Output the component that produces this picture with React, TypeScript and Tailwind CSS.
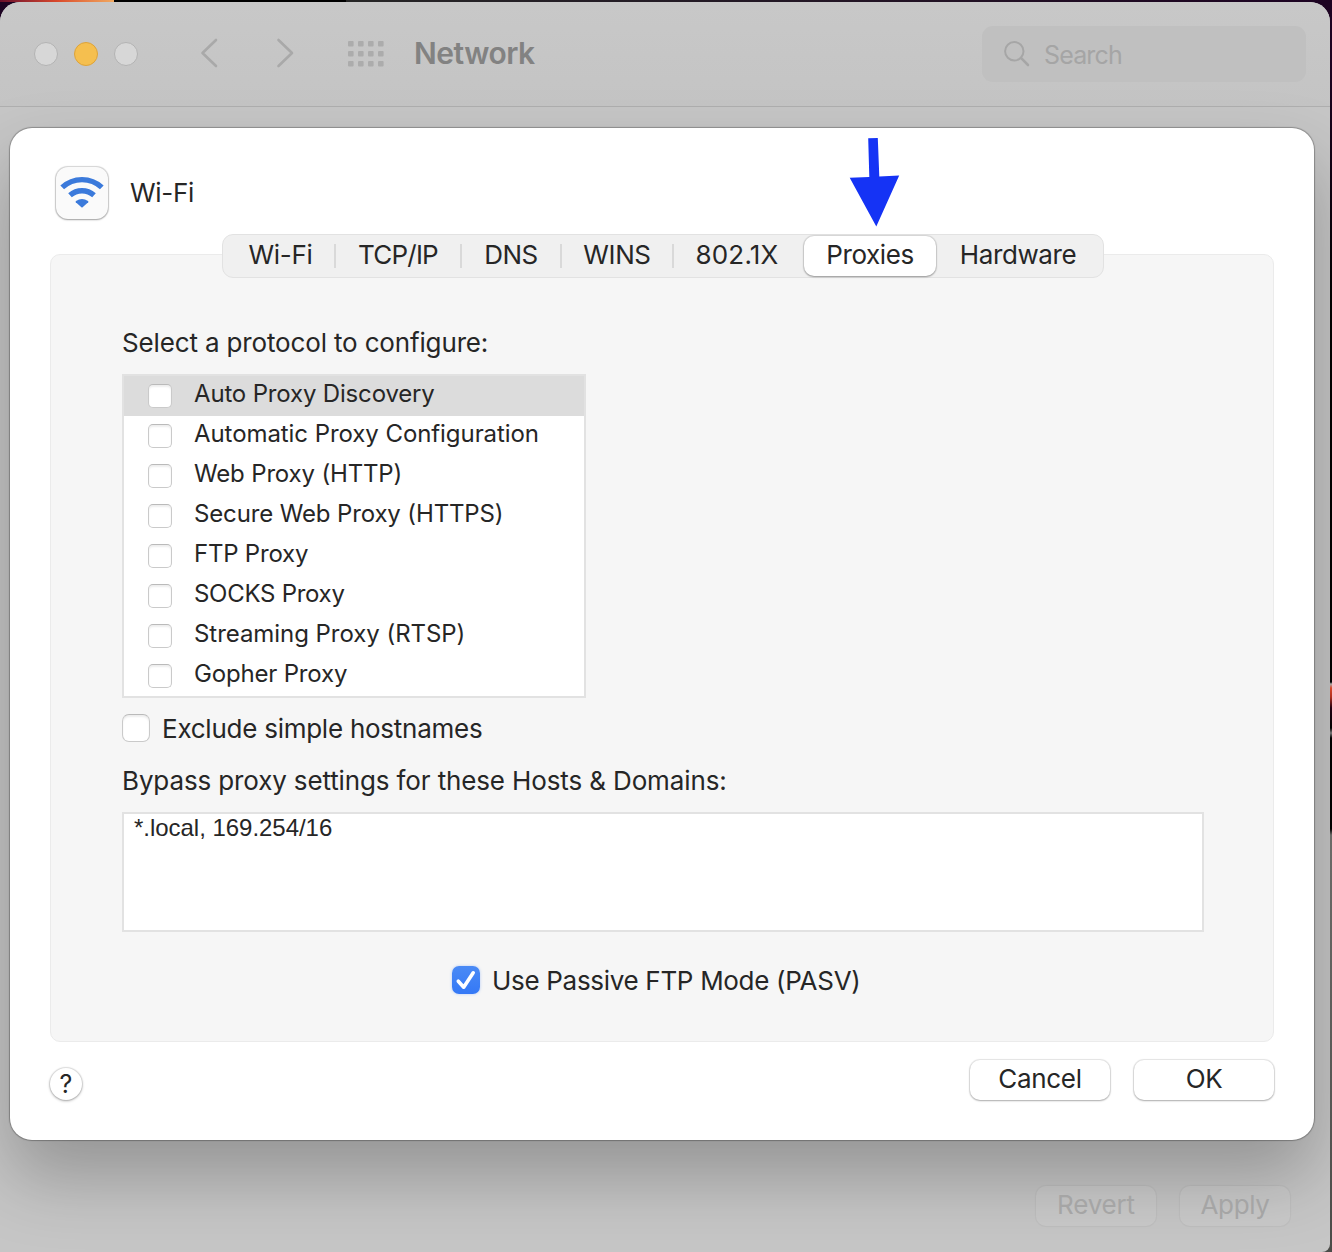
import { useState } from "react";
import clsx from "clsx";

const tabs = [
	{ name: "Wi-Fi", width: "w-[111px]", tracking: "tracking-[-0.3px] pl-1", divider: false },
	{ name: "TCP/IP", width: "w-[126px]", tracking: "tracking-[-0.8px]", divider: true },
	{ name: "DNS", width: "w-[100px]", tracking: "tracking-[-0.5px]", divider: true },
	{ name: "WINS", width: "w-[112px]", tracking: "tracking-[-0.4px]", divider: true },
	{ name: "802.1X", width: "w-[132px]", tracking: "tracking-[0.2px] pr-1", divider: true },
	{ name: "Proxies", width: "w-[132px]", tracking: "tracking-[-0.4px]", divider: false },
	{ name: "Hardware", width: "w-[164px]", tracking: "tracking-[-0.4px]", divider: false },
];

const protocols = [
	{ name: "Auto Proxy Discovery", tracking: "tracking-[-0.17px]" },
	{ name: "Automatic Proxy Configuration", tracking: "tracking-[-0.07px]" },
	{ name: "Web Proxy (HTTP)", tracking: "tracking-[-0.16px]" },
	{ name: "Secure Web Proxy (HTTPS)", tracking: "tracking-[-0.14px]" },
	{ name: "FTP Proxy", tracking: "tracking-[-0.22px]" },
	{ name: "SOCKS Proxy", tracking: "tracking-[-0.28px]" },
	{ name: "Streaming Proxy (RTSP)", tracking: "tracking-[-0.05px]" },
	{ name: "Gopher Proxy", tracking: "tracking-[-0.18px]" },
];

function TitleBar() {
	return (
		<header className="flex h-[105px] shrink-0 items-start border-b border-[#afafaf] bg-linear-to-b from-[#c8c8c8] to-[#c4c4c4] pl-[34px] pr-6">
			<div className="mt-10 flex gap-4">
				<span className="size-6 rounded-full border border-[#b3b3b3] bg-[#d7d7d7]" />
				<span className="size-6 rounded-full border border-[#dda33a] bg-[#f5bf4f]" />
				<span className="size-6 rounded-full border border-[#b3b3b3] bg-[#d7d7d7]" />
			</div>
			<svg
				className="ml-[62px] mt-[34px]"
				width="96"
				height="34"
				fill="none"
				stroke="#a9a9a9"
				strokeWidth="2.6"
				strokeLinecap="round"
				strokeLinejoin="round"
			>
				<path d="M16 4 L2.5 17 L16 30" />
				<path d="M78.5 4 L92 17 L78.5 30" />
			</svg>
			<svg className="ml-[52px] mt-[39px]" width="36" height="26" fill="#acacac">
				{[0, 10, 20].map((y) =>
					[0, 10, 20, 30].map((x) => (
						<rect key={`${x}-${y}`} x={x} y={y} width="5.6" height="5.6" rx="1" />
					))
				)}
			</svg>
			<h1 className="ml-[30px] mt-8 text-[30px] font-semibold leading-[38px] tracking-[-0.5px] text-[#828282]">
				Network
			</h1>
			<div className="ml-auto mt-6 flex h-14 w-[324px] items-center rounded-[11px] bg-[#c0c0c0] pl-[22px]">
				<svg
					width="26"
					height="26"
					fill="none"
					stroke="#a6a6a6"
					strokeWidth="2"
					strokeLinecap="round"
				>
					<circle cx="10.3" cy="10.3" r="9.2" />
					<path d="M17.2 17.2 L24 24" strokeWidth="2.6" />
				</svg>
				<span className="ml-[14px] mt-px text-[25px] leading-8 tracking-[-0.85px] text-[#a5a5a5]">
					Search
				</span>
			</div>
		</header>
	);
}

function WifiIcon() {
	return (
		<div className="flex size-[52px] items-center justify-center rounded-[12px] bg-[#fafafa] pb-0.5 shadow-[0_0_1px_0.5px_rgba(0,0,0,0.16),0_1px_2px_rgba(0,0,0,0.25)]">
			<svg width="44" height="34" viewBox="0 0 44 34" fill="none" stroke="#3b7adb">
				<path d="M2.2 12.4 A29 29 0 0 1 41.8 12.4" strokeWidth="5.4" />
				<path d="M10 20.3 A18 18 0 0 1 34 20.3" strokeWidth="5.4" />
				<path
					d="M15.8 27.2 Q15.4 26.6 16 26.1 Q22 21.7 28 26.1 Q28.6 26.6 28.2 27.2 L22.6 32.3 Q22 32.8 21.4 32.3 Z"
					fill="#3b7adb"
					stroke="none"
				/>
			</svg>
		</div>
	);
}

function Checkbox({
	checked = false,
	small = false,
	onClick,
}: {
	checked?: boolean;
	small?: boolean;
	onClick?: () => void;
}) {
	return (
		<button
			role="checkbox"
			aria-checked={checked}
			onClick={onClick}
			className={clsx(
				"flex shrink-0 items-center justify-center",
				small ? "size-6 rounded-[5px]" : "size-7 rounded-[7px]",
				checked
					? "bg-linear-to-b from-[#4a8af5] to-[#3478f6] shadow-[0_0_3px_rgba(52,120,246,0.35)]"
					: "border border-[#cacaca] border-t-[#bababa] bg-white shadow-[inset_0_2px_2px_rgba(0,0,0,0.07)]"
			)}
		>
			{checked && (
				<svg
					width="28"
					height="28"
					fill="none"
					stroke="#fff"
					strokeWidth="3.6"
					strokeLinecap="round"
					strokeLinejoin="round"
				>
					<path d="M6.3 15.2 L11.7 21.2 L21.2 6.8" />
				</svg>
			)}
		</button>
	);
}

function TabBar({
	active,
	setActive,
}: {
	active: string;
	setActive: (name: string) => void;
}) {
	return (
		<nav className="relative z-10 -mb-6 ml-[172px] flex h-11 w-[882px] items-center rounded-[11px] border border-[#e2e2e2] bg-[#f0f0f0]">
			{tabs.map((tab) => (
				<button
					key={tab.name}
					onClick={() => setActive(tab.name)}
					className={clsx(
						"flex shrink-0 items-center justify-center pb-[3px] text-[26px]",
						tab.width,
						tab.tracking,
						tab.divider && "h-6 border-l-2 border-[#d9d9d9]",
						!tab.divider && "h-10",
						active === tab.name &&
							"rounded-[10px] bg-white shadow-[0_0_1px_1px_rgba(0,0,0,0.1),0_1px_2px_rgba(0,0,0,0.3)]"
					)}
				>
					{tab.name}
				</button>
			))}
		</nav>
	);
}

function ProtocolList() {
	const [selected, setSelected] = useState(protocols[0].name);
	const [enabled, setEnabled] = useState<string[]>([]);

	const toggle = (name: string) => {
		if (enabled.includes(name)) {
			setEnabled(enabled.filter((item) => item !== name));
		} else {
			setEnabled([...enabled, name]);
		}
	};

	return (
		<ul className="mt-[15px] h-[324px] w-[464px] border-2 border-[#e2e2e2] bg-white">
			{protocols.map(({ name, tracking }) => (
				<li
					key={name}
					onClick={() => setSelected(name)}
					className={clsx(
						"flex h-10 items-center pl-6",
						selected === name && "bg-[#dcdcdc]"
					)}
				>
					<Checkbox
						small
						checked={enabled.includes(name)}
						onClick={() => toggle(name)}
					/>
					<span className={clsx("-mt-1 ml-[22px] text-2xl", tracking)}>{name}</span>
				</li>
			))}
		</ul>
	);
}

function ProxiesPanel() {
	const [exclude, setExclude] = useState(false);
	const [passive, setPassive] = useState(true);

	return (
		<section className="h-[788px] rounded-[10px] border border-[#ebebeb] bg-[#f6f6f6] px-[71px] pt-[72px] text-[26px]">
			<p className="leading-8 tracking-[-0.15px]">Select a protocol to configure:</p>
			<ProtocolList />
			<div className="mt-4 flex h-7 items-center">
				<Checkbox checked={exclude} onClick={() => setExclude(!exclude)} />
				<span className="ml-3 mt-px tracking-[-0.25px]">Exclude simple hostnames</span>
			</div>
			<p className="mt-[23px] leading-8 tracking-[-0.13px]">
				Bypass proxy settings for these Hosts &amp; Domains:
			</p>
			<div className="mt-[15px] h-[120px] w-[1082px] border-2 border-[#e2e2e2] bg-white pl-[10px] font-['Liberation_Sans',Arial,sans-serif] text-2xl leading-7 tracking-[-0.03px]">
				*.local, 169.254/16
			</div>
			<div className="ml-[330px] mt-[34px] flex h-7 items-center">
				<Checkbox checked={passive} onClick={() => setPassive(!passive)} />
				<span className="ml-3 mt-px tracking-[-0.31px]">Use Passive FTP Mode (PASV)</span>
			</div>
		</section>
	);
}

function NetworkSheet() {
	const [active, setActive] = useState("Proxies");

	return (
		<main className="relative ml-[10px] mt-[21px] h-[1012px] w-[1304px] shrink-0 rounded-[22px] bg-white px-10 pt-[39px] text-[#262626] shadow-[0_0_1px_1px_rgba(0,0,0,0.28),0_36px_70px_rgba(0,0,0,0.25)]">
			<div className="ml-1.5 flex h-[52px] items-center">
				<WifiIcon />
				<h2 className="ml-[22px] text-[26px] leading-8 tracking-[-0.3px]">Wi-Fi</h2>
			</div>
			<div className="h-[15px]" />
			<TabBar active={active} setActive={setActive} />
			<ProxiesPanel />
			<footer className="mt-[18px] flex items-start text-[26px]">
				<button className="mt-2 flex size-8 items-center justify-center rounded-full bg-white text-[25px] leading-none shadow-[0_0_1px_1px_rgba(0,0,0,0.1),0_1px_3px_rgba(0,0,0,0.3)]">
					?
				</button>
				<button className="ml-auto h-10 w-[140px] rounded-[10px] bg-white pb-[3px] leading-[37px] tracking-[-0.3px] shadow-[0_0_1px_1px_rgba(0,0,0,0.1),0_1px_2px_rgba(0,0,0,0.25)]">
					Cancel
				</button>
				<button className="ml-6 h-10 w-[140px] rounded-[10px] bg-white pb-[3px] leading-[37px] tracking-[-0.3px] shadow-[0_0_1px_1px_rgba(0,0,0,0.1),0_1px_2px_rgba(0,0,0,0.25)]">
					OK
				</button>
			</footer>
			<svg
				className="absolute left-[838px] top-[9px]"
				width="54"
				height="92"
				fill="#1533f5"
			>
				<path d="M20.2 1.2 L29.8 1 L31.3 39.6 L51.2 38.6 L28.3 89.6 L1.7 40.8 L21.3 40 Z" />
			</svg>
		</main>
	);
}

export default function App() {
	return (
		<div className="h-[1252px] w-[1332px] overflow-hidden bg-[linear-gradient(#1d0322_0,#1d0322_60px,#000_300px,#000_682px,#aaa_684px,#d9482b_688px,#b03020_697px,#200010_708px,#000_728px,#777_733px,#000_738px,#000_829px,#6b6b68_835px,#4b4b48_1252px)] font-[Inter,sans-serif] text-black">
			<div className="flex h-0.5">
				<div className="w-[114px] bg-linear-to-r from-[#6b0f2a] via-[#d9482b] to-[#f0a860]" />
				<div className="w-[232px] bg-black" />
				<div className="flex-1 bg-linear-to-r from-[#262626] to-[#1d0322]" />
			</div>
			<div className="flex h-[1250px] w-[1330px] flex-col overflow-hidden rounded-br-[8px] rounded-t-[20px] bg-[#c6c6c6]">
				<TitleBar />
				<NetworkSheet />
				<div className="mr-10 mt-[46px] flex justify-end gap-6 text-[26px] leading-[37px] text-[#a5a5a5]">
					<button className="relative h-10 w-[120px] rounded-[10px] bg-white/5 pb-[3px] tracking-[-0.2px] shadow-[0_0_1px_1px_rgba(0,0,0,0.04)]">
						Revert
					</button>
					<button className="relative h-10 w-[110px] rounded-[10px] bg-white/5 pb-[3px] tracking-[-0.4px] shadow-[0_0_1px_1px_rgba(0,0,0,0.04)]">
						Apply
					</button>
				</div>
			</div>
		</div>
	);
}
